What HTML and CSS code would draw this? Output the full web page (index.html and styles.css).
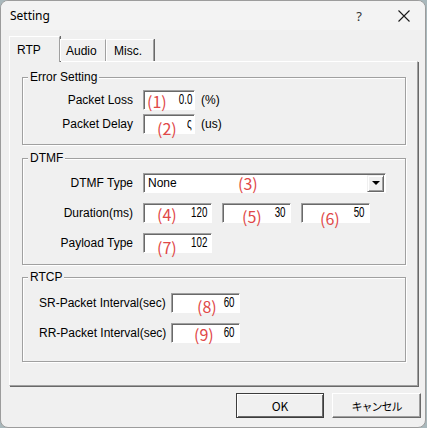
FILE: index.html
```html
<!DOCTYPE html>
<html lang="ja">
<head>
    <meta charset="UTF-8">
    <meta name="viewport" content="width=device-width, initial-scale=1.0">
    <title>Setting</title>
    <link rel="stylesheet" href="styles.css">
</head>
<body>
    <div class="window">
        <div class="titlebar">
            <span class="title">Setting</span>
            <span class="help">?</span>
            <svg class="close" width="12" height="12" viewBox="0 0 12 12">
                <path d="M0.5 0.5 L11.5 11.5 M11.5 0.5 L0.5 11.5" stroke="#1a1a1a" stroke-width="1.1" fill="none"/>
            </svg>
        </div>
        <div class="content">
            <div class="tabs">
                <div class="tab active">RTP</div>
                <div class="tab">Audio</div>
                <div class="tab tab-last">Misc.</div>
            </div>
            <div class="panel">
                <div class="group group-error">
                    <span class="group-title">Error Setting</span>
                    <div class="row">
                        <label class="lbl">Packet Loss</label>
                        <div class="field small"><span class="val">0.0</span><span class="note n1">(1)</span></div>
                        <span class="unit">(%)</span>
                    </div>
                    <div class="row">
                        <label class="lbl">Packet Delay</label>
                        <div class="field small"><span class="val">ς</span><span class="note n2">(2)</span></div>
                        <span class="unit">(us)</span>
                    </div>
                </div>

                <div class="group group-dtmf">
                    <span class="group-title">DTMF</span>
                    <div class="row">
                        <label class="lbl">DTMF Type</label>
                        <div class="combo">
                            <span class="combo-text">None</span>
                            <span class="combo-btn"><span class="arrow"></span></span>
                            <span class="note n3">(3)</span>
                        </div>
                    </div>
                    <div class="row">
                        <label class="lbl">Duration(ms)</label>
                        <div class="fields">
                            <div class="field"><span class="val">120</span><span class="note n4">(4)</span></div>
                            <div class="field"><span class="val">30</span><span class="note n5">(5)</span></div>
                            <div class="field"><span class="val">50</span><span class="note n6">(6)</span></div>
                        </div>
                    </div>
                    <div class="row">
                        <label class="lbl">Payload Type</label>
                        <div class="field"><span class="val">102</span><span class="note n7">(7)</span></div>
                    </div>
                </div>

                <div class="group group-rtcp">
                    <span class="group-title">RTCP</span>
                    <div class="row">
                        <label class="lbl-wide">SR-Packet Interval(sec)</label>
                        <div class="field"><span class="val">60</span><span class="note n8">(8)</span></div>
                    </div>
                    <div class="row">
                        <label class="lbl-wide">RR-Packet Interval(sec)</label>
                        <div class="field"><span class="val">60</span><span class="note n9">(9)</span></div>
                    </div>
                </div>
            </div>
            <div class="buttons">
                <button class="btn btn-default">OK</button>
                <button class="btn btn-cancel">キャンセル</button>
            </div>
        </div>
    </div>
</body>
</html>
```

FILE: styles.css
```css
* {
    box-sizing: border-box;
}
body {
    margin: 0;
    background: #a9b8bc;
    font-family: "Liberation Sans", "Noto Sans CJK JP", sans-serif;
    font-size: 12px;
    color: #000;
}
.window {
    width: 426px;
    height: 428px;
    background: #f0f0f0;
    border: 1px solid #9c9c9c;
    border-radius: 8px;
    overflow: hidden;
}
.titlebar {
    height: 29px;
    background: #f3f3f3;
    display: flex;
    align-items: center;
    padding: 0 15px 0 9px;
}
.title {
    font-family: "Noto Sans", sans-serif;
    font-size: 12px;
}
.help {
    margin-left: auto;
    margin-right: 36px;
    font-family: "Noto Sans", sans-serif;
    font-size: 13px;
    color: #333;
}
.content {
    padding-left: 8px;
}
.tabs {
    display: flex;
    align-items: flex-end;
    height: 25px;
    margin-top: 6px;
    position: relative;
    z-index: 1;
}
.tab {
    height: 22px;
    padding: 3px 0 0 5px;
    line-height: 16px;
    border-top: 1px solid #fff;
    border-left: 1px solid #fff;
    border-right: 1px solid #a0a0a0;
    box-shadow: 1px 0 0 #696969;
    background: #f0f0f0;
    width: 46px;
}
.tab-last {
    width: 48px;
    padding-left: 7px;
}
.tab.active {
    width: 51px;
    height: 26px;
    margin-bottom: -1px;
    padding: 5px 0 0 7px;
}
.panel {
    width: 409px;
    height: 325px;
    border-top: 1px solid #fff;
    border-left: 1px solid #fff;
    border-right: 1px solid #a0a0a0;
    border-bottom: 1px solid #a0a0a0;
    box-shadow: 1px 1px 0 #696969;
    padding-left: 12px;
}
.group {
    position: relative;
    width: 384px;
    border: 1px solid #a0a0a0;
    box-shadow: 1px 1px 0 #fff, inset 1px 1px 0 #fff;
}
.group-title {
    position: absolute;
    top: -9px;
    left: 5px;
    padding: 0 2px;
    line-height: 16px;
    background: #f0f0f0;
}
.group-error {
    margin-top: 15px;
    height: 68px;
    padding-top: 12px;
}
.group-dtmf {
    margin-top: 13px;
    height: 107px;
    padding-top: 14px;
}
.group-rtcp {
    margin-top: 12px;
    height: 85px;
    padding: 15px 0 0 16px;
}
.row {
    display: flex;
    align-items: center;
    height: 20px;
}
.row + .row {
    margin-top: 10px;
}
.group-error .row + .row {
    margin-top: 4px;
}
.lbl {
    width: 110px;
    margin-right: 10px;
    text-align: right;
    white-space: nowrap;
}
.lbl-wide {
    width: 125px;
    margin-right: 7px;
    white-space: nowrap;
}
.fields {
    display: flex;
    gap: 10px;
}
.field {
    position: relative;
    width: 69px;
    height: 20px;
    background: #fff;
    border: 1px solid;
    border-color: #a0a0a0 #fff #fff #a0a0a0;
    box-shadow: inset 1px 1px 0 #696969;
    display: flex;
    justify-content: flex-end;
    align-items: flex-start;
    padding: 2px 4px 0 0;
}
.field.small {
    width: 52px;
    padding-right: 2px;
}
.val {
    display: inline-block;
    font-family: "Liberation Sans", sans-serif;
    font-size: 14px;
    line-height: 13px;
    transform: scaleX(0.7);
    transform-origin: right center;
}
.unit {
    margin-left: 6px;
}
.note {
    position: absolute;
    font-family: "Noto Sans CJK JP", sans-serif;
    font-size: 16px;
    line-height: 20px;
    color: #e04848;
    white-space: nowrap;
}
.n1 { left: 3px; top: 0; }
.n2 { left: 13px; top: 3px; }
.n3 { left: 94px; top: -1px; }
.n4 { left: 13px; top: 0; }
.n5 { left: 19px; top: 2px; }
.n6 { left: 18px; top: 4px; }
.n7 { left: 13px; top: 3px; }
.n8 { left: 25px; top: 2px; }
.n9 { left: 22px; top: 0; }
.combo {
    position: relative;
    width: 243px;
    height: 20px;
    background: #fff;
    border: 1px solid;
    border-color: #a0a0a0 #fff #fff #a0a0a0;
    box-shadow: inset 1px 1px 0 #696969;
    display: flex;
    align-items: center;
    padding: 1px;
}
.combo-text {
    flex: 1;
    padding-left: 3px;
    line-height: 16px;
}
.combo-btn {
    width: 17px;
    height: 17px;
    background: #f0f0f0;
    border: 1px solid;
    border-color: #f0f0f0 #696969 #696969 #f0f0f0;
    box-shadow: inset 1px 1px 0 #fff, inset -1px -1px 0 #a0a0a0;
    display: flex;
    align-items: center;
    justify-content: center;
}
.arrow {
    width: 0;
    height: 0;
    border-left: 4px solid transparent;
    border-right: 4px solid transparent;
    border-top: 4px solid #000;
}
.buttons {
    display: flex;
    justify-content: flex-end;
    gap: 8px;
    margin-top: 7px;
    padding-right: 4px;
}
.btn {
    width: 88px;
    height: 25px;
    background: #f0f0f0;
    font-family: "Noto Sans CJK JP", sans-serif;
    font-size: 12px;
    color: #000;
    border: 1px solid;
    border-color: #fff #696969 #696969 #fff;
    box-shadow: inset -1px -1px 0 #a0a0a0;
    padding: 0;
}
.btn-default {
    border: 1px solid #3c3c3c;
    box-shadow: inset 1px 1px 0 #fff, inset -1px -1px 0 #696969;
}
.btn-cancel {
    width: 89px;
    font-size: 11px;
    letter-spacing: -1px;
}
```
